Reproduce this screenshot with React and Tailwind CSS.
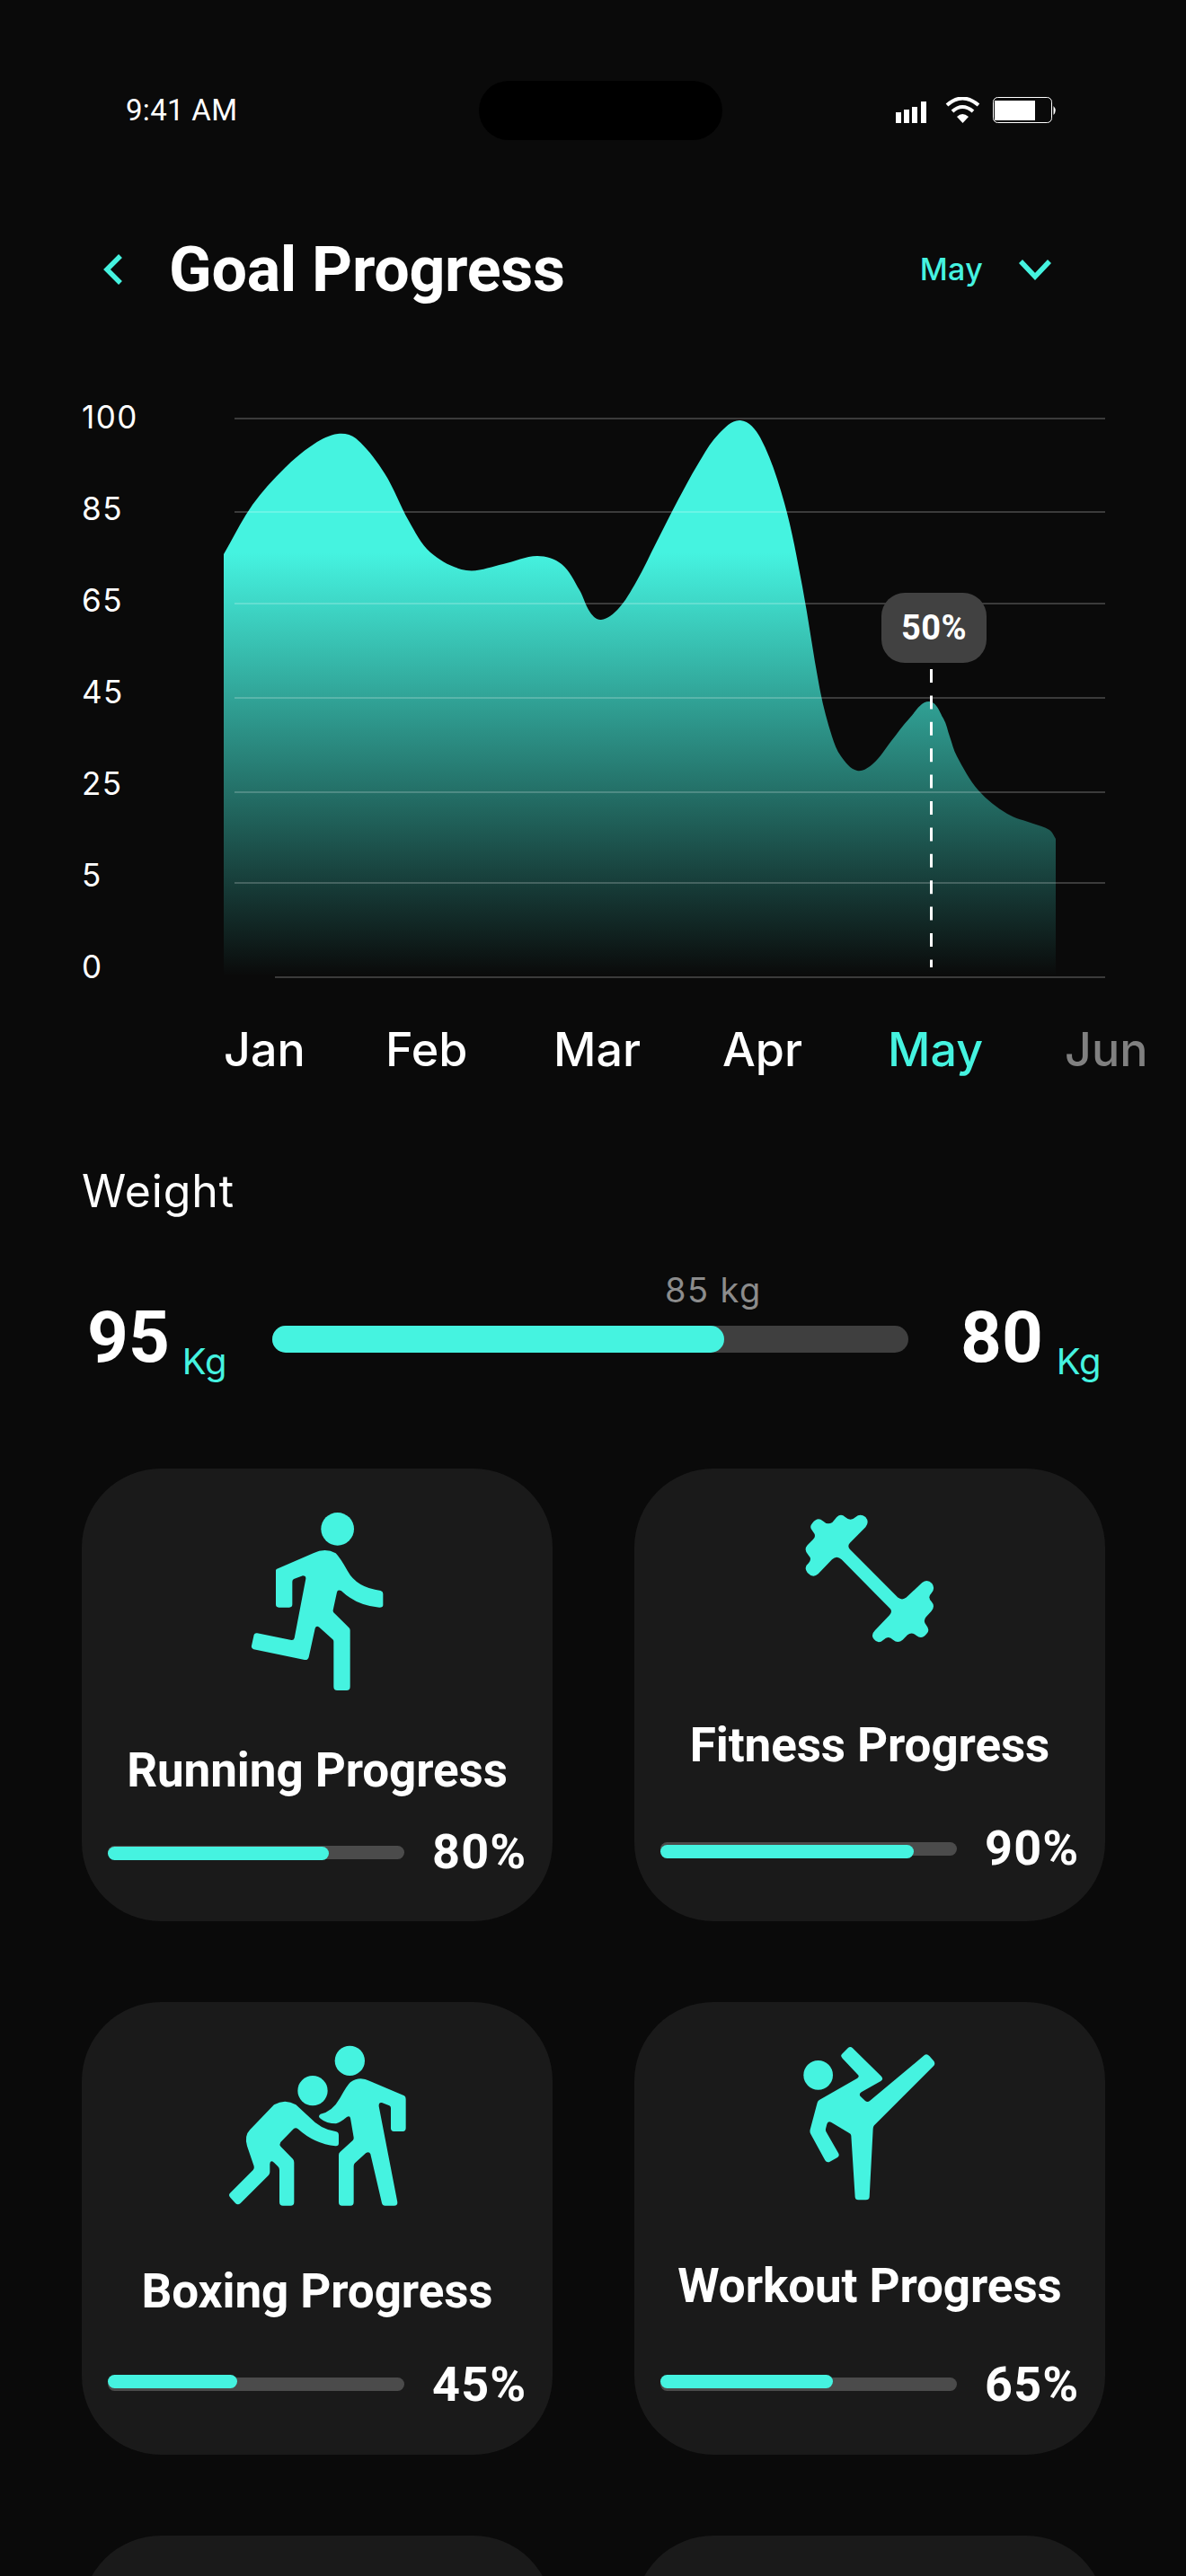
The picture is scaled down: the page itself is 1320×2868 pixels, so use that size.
const pts = [[249,617],[281,562],[317,521],[350,494],[376,483],[396,488],[428,527],[455,580],[479,615],[519,635],[560,628],[598,619],[625,628],[645,657],[657,682],[669,690],[688,678],[708,648],[731,603],[755,556],[779,513],[800,483],[824,468],[846,487],[873,560],[893,653],[913,770],[926,820],[936,842],[954,858],[972,850],[992,825],[1012,800],[1034,781],[1050,800],[1057,820],[1065,842],[1089,880],[1121,906],[1150,917],[1168,924],[1175,934]];

function smooth(p) {
  const d = (a, b) => Math.hypot(a[0] - b[0], a[1] - b[1]);
  const tan = (i) => {
    const a = p[Math.max(i - 1, 0)], b = p[Math.min(i + 1, p.length - 1)];
    const l = d(a, b) || 1;
    return [(b[0] - a[0]) / l, (b[1] - a[1]) / l];
  };
  let s = `M${p[0][0]} ${p[0][1]}`;
  for (let i = 0; i < p.length - 1; i++) {
    const l = d(p[i], p[i + 1]) / 3;
    const t1 = tan(i), t2 = tan(i + 1);
    s += ` C${(p[i][0] + t1[0] * l).toFixed(1)} ${(p[i][1] + t1[1] * l).toFixed(1)} ${(p[i + 1][0] - t2[0] * l).toFixed(1)} ${(p[i + 1][1] - t2[1] * l).toFixed(1)} ${p[i + 1][0]} ${p[i + 1][1]}`;
  }
  return s + " L1175 1087 L249 1087 Z";
}
const curve = smooth(pts);

const Run = () => (
  <svg width="152" height="204" viewBox="170 60 456 612" fill="#45F3E0">
    <circle cx="466" cy="124" r="55" />
    <path d="M262 258 L385 205 Q425 185 460 205 Q475 220 500 265 Q530 320 610 330 Q618 332 618 340 L618 378 Q618 386 606 386 Q530 380 478 330 Q466 325 464 335 L451 395 Q450 402 456 406 L503 452 Q508 456 508 462 L508 650 Q508 663 496 663 L465 663 Q453 663 453 650 L453 500 Q453 496 450 493 L405 452 Q395 445 391 456 L370 552 Q367 563 356 561 L186 526 Q177 523 179 514 L187 477 Q190 470 198 472 L312 495 Q320 496 322 488 L360 290 Q361 280 350 280 L320 291 Q315 294 315 300 L315 376 Q315 386 305 386 L270 386 Q260 386 260 376 L260 262 Z" />
  </svg>
);
const Dumbbell = () => (
  <svg width="148.33" height="150" viewBox="100 60 445 450" fill="#45F3E0">
    <path d="M130 105 Q148 82 165 97 Q180 112 197 102 L212 84 Q226 70 240 84 Q258 100 275 84 Q290 70 308 84 Q322 100 308 118 L256 170 Q246 180 256 192 L415 352 Q430 365 445 352 L497 303 Q515 290 530 306 Q542 322 528 338 Q514 352 528 366 Q542 382 528 398 L510 418 Q498 432 512 447 Q524 462 512 474 Q496 494 478 480 Q462 466 448 478 L432 494 Q416 508 400 494 Q384 478 368 494 Q350 510 336 492 Q324 478 340 462 L388 412 Q400 398 388 388 L228 226 Q212 210 196 226 L150 274 Q132 290 114 270 Q100 252 118 238 Q130 224 118 212 Q100 194 114 178 L132 160 Q146 148 132 132 Q118 118 130 105 Z" />
  </svg>
);
const Boxing = () => (
  <svg width="202" height="181.67" viewBox="66 45 606 545" fill="#45F3E0">
    <circle cx="478" cy="100" r="50" />
    <circle cx="354" cy="200" r="50" />
    <path d="M545 168 L660 217 Q665 220 665 228 L665 325 Q665 336 655 336 L625 336 Q615 336 615 325 L615 258 Q615 252 610 250 L585 240 Q574 238 575 252 L637 572 Q638 584 626 584 L596 584 Q587 584 585 575 L547 412 Q543 402 532 408 L495 442 Q491 446 491 452 L491 572 Q491 584 480 584 L452 584 Q441 584 441 572 L441 415 Q441 408 446 404 L488 366 Q492 362 491 356 L480 292 Q478 282 468 288 Q448 305 432 310 Q400 310 380 293 Q370 285 380 278 Q420 270 445 225 Q470 180 480 172 Q510 150 545 168 Z" />
    <path d="M225 247 Q262 225 298 247 L345 290 Q380 328 430 336 Q441 338 441 348 L441 376 Q441 386 430 385 Q360 378 305 328 Q297 322 290 328 L247 372 Q242 380 247 386 L288 428 Q292 432 292 440 L292 572 Q292 584 280 584 L255 584 Q243 584 243 572 L243 465 Q243 458 238 453 L225 440 Q212 430 211 445 L211 472 Q211 478 207 482 L113 576 Q104 584 96 576 L78 556 Q72 548 78 542 L155 465 Q160 460 158 452 L135 385 Q125 350 145 330 Z" />
  </svg>
);
const Kick = () => (
  <svg width="151.67" height="176.67" viewBox="95 45 455 530" fill="#45F3E0">
    <circle cx="151" cy="148" r="49" />
    <path d="M230 78 L250 58 Q258 50 266 58 L362 152 Q370 162 360 168 L295 205 Q285 212 293 220 L308 234 Q316 240 324 233 L505 82 Q513 74 522 84 L536 100 Q544 110 536 118 L338 316 Q334 320 334 328 L322 555 Q321 565 310 565 L285 565 Q275 565 274 555 L261 350 Q260 344 255 342 L195 306 Q183 300 180 312 L176 328 Q175 334 178 338 L218 408 Q224 418 214 424 L190 437 Q180 442 174 433 L126 345 Q122 338 124 330 L148 240 Q150 233 156 230 L282 158 Q290 152 283 146 L232 92 Q224 84 230 78 Z" />
  </svg>
);

const grid = [466, 570, 672, 777, 882, 983];

function Card({ icon, title, pct, fill, pt, titleMt, rowMt, fillTop }) {
  return (
    <div className={`flex h-[504px] w-[524px] flex-col items-center rounded-[88px] bg-[#1A1A1A] ${pt}`}>
      {icon}
      <h3 className={`font-['Roboto'] text-[53px] leading-[60px] font-bold tracking-[-0.1px] whitespace-nowrap text-white ${titleMt}`}>{title}</h3>
      <div className={`flex h-[60px] w-full items-center gap-[31px] pl-[29px] ${rowMt}`}>
        <div className="relative h-[15px] w-[330px] shrink-0 rounded-full bg-[#4B4B4B]">
          <div className={`absolute left-0 h-[15px] rounded-full bg-[#45F3E0] ${fill} ${fillTop}`} />
        </div>
        <span className="font-['Roboto'] text-[54px] leading-[60px] font-bold tracking-[1.2px] whitespace-nowrap text-white">{pct}</span>
      </div>
    </div>
  );
}

export default function App() {
  return (
    <div className="h-[2868px] w-[1320px] overflow-hidden bg-[#0A0A0A] pt-[90px] font-['Inter',sans-serif]">
      {/* status bar */}
      <div className="flex h-[66px] items-center pl-[140px]">
        <span className="w-[393px] font-['Roboto'] text-[33px] leading-[40px] tracking-[0.3px] text-white">9:41 AM</span>
        <div className="h-[66px] w-[271px] rounded-[33px] bg-black" />
        <svg className="ml-[193px]" width="180" height="30" viewBox="997 109 180 30" fill="white">
          <rect x="997" y="126" width="6" height="12" />
          <rect x="1006" y="123" width="6" height="15" />
          <rect x="1015" y="120" width="6" height="18" />
          <rect x="1025" y="114" width="6" height="24" />
          <path d="M1054 118 Q1071 103 1089 118" fill="none" stroke="white" strokeWidth="4" />
          <path d="M1060 125 Q1071 115 1083 125" fill="none" stroke="white" strokeWidth="4" />
          <path d="M1065 131 Q1071 125 1078 131 L1071.5 138 Z" />
          <rect x="1105.5" y="109.5" width="65" height="28" rx="5" fill="none" stroke="white" />
          <rect x="1107" y="113" width="45" height="22" />
          <path d="M1172.5 119 Q1177 124 1172.5 129 Z" />
        </svg>
      </div>

      {/* header */}
      <div className="mt-[104px] flex h-[80px] items-center pr-[150px] pl-[114px]">
        <svg width="24" height="36" viewBox="0 0 24 36" fill="none" stroke="#45F3E0" strokeWidth="5.5" strokeLinejoin="miter">
          <path d="M20 3 L5 18 L20 33" />
        </svg>
        <h1 className="ml-[50px] font-['Roboto'] text-[70px] leading-[80px] font-bold tracking-[-0.3px] whitespace-nowrap text-white">Goal Progress</h1>
        <span className="ml-auto font-['Inter'] text-[34px] leading-[44px] font-medium tracking-[0.3px] text-[#45F3E0]">May</span>
        <svg className="ml-[40px]" width="36" height="24" viewBox="0 0 36 24" fill="none" stroke="#45F3E0" strokeWidth="5.5">
          <path d="M2 3 L18 20 L34 3" />
        </svg>
      </div>

      {/* chart */}
      <div className="mt-[103px] flex pl-[91px]">
        <div className="mt-[1px] flex h-[652px] w-[158px] flex-col justify-between font-['Inter'] text-[35px] leading-[40px] tracking-[1.5px] text-white">
          {["100", "85", "65", "45", "25", "5", "0"].map((l) => (
            <span key={l}>{l}</span>
          ))}
        </div>
        <div className="relative h-[653px] w-[981px]">
          <svg width="981" height="653" viewBox="249 443 981 653">
            <defs>
              <linearGradient id="area" x1="0" y1="467" x2="0" y2="1087" gradientUnits="userSpaceOnUse">
                <stop offset="0.24" stopColor="#45F3E0" />
                <stop offset="1" stopColor="#45F3E0" stopOpacity="0" />
              </linearGradient>
            </defs>
            <path d={curve} fill="url(#area)" />
            {grid.map((y) => (
              <line key={y} x1="261" x2="1230" y1={y} y2={y} stroke="white" strokeOpacity="0.2" strokeWidth="2" />
            ))}
            <line x1="306" x2="1230" y1="1088" y2="1088" stroke="white" strokeOpacity="0.2" strokeWidth="2" />
            <line x1="1036.5" x2="1036.5" y1="745" y2="1077" stroke="white" strokeWidth="3" strokeDasharray="15 14.4" />
          </svg>
          <div className="absolute top-[217px] left-[732px] flex h-[78px] w-[117px] items-center justify-center rounded-[26px] bg-[#414141] font-['Roboto'] text-[38px] font-bold tracking-[0.5px] text-white">50%</div>
        </div>
      </div>

      {/* months */}
      <div className="mt-[42px] flex pl-[249px] font-['Inter'] text-[52px] leading-[62px] font-medium whitespace-nowrap text-white">
        <span className="w-[180px]">Jan</span>
        <span className="w-[187px]">Feb</span>
        <span className="w-[188px]">Mar</span>
        <span className="w-[184px]">Apr</span>
        <span className="w-[197px] text-[#45F3E0]">May</span>
        <span className="text-[#808080]">Jun</span>
      </div>

      {/* weight */}
      <div className="mt-[96px] pl-[91px] font-['Inter'] text-[50px] leading-[60px] tracking-[0.9px] text-white">Weight</div>

      <div className="mt-[80px] flex h-[110px] items-center pl-[97px]">
        <div className="flex w-[206px] items-baseline">
          <span className="-translate-y-[2px] font-['Roboto'] text-[80px] font-bold text-white">95</span>
          <span className="ml-[14px] translate-y-[12px] font-['Inter'] text-[40px] text-[#45F3E0]">Kg</span>
        </div>
        <div className="relative h-[30px] w-[708px] rounded-full bg-[#3F3F3F]">
          <div className="h-[30px] w-[503px] rounded-full bg-[#45F3E0]" />
          <span className="absolute -top-[68px] left-[437px] font-['Inter'] text-[38px] tracking-[1.4px] whitespace-nowrap text-[#8C8C8C]">85 kg</span>
        </div>
        <div className="ml-[58px] flex items-baseline">
          <span className="-translate-y-[2px] font-['Roboto'] text-[80px] font-bold text-white">80</span>
          <span className="ml-[15px] translate-y-[12px] font-['Inter'] text-[40px] text-[#45F3E0]">Kg</span>
        </div>
      </div>

      {/* cards */}
      <div className="mt-[89px] grid grid-cols-[524px_524px] gap-x-[91px] gap-y-[90px] pl-[91px]">
        <Card icon={<Run />} title="Running Progress" pct="80%" fill="w-[246px]" pt="pt-[46px]" titleMt="mt-[56px]" rowMt="mt-[31px]" fillTop="top-[1px]" />
        <Card icon={<Dumbbell />} title="Fitness Progress" pct="90%" fill="w-[282px]" pt="pt-[46px]" titleMt="mt-[82px]" rowMt="mt-[55px]" fillTop="top-[3px]" />
        <Card icon={<Boxing />} title="Boxing Progress" pct="45%" fill="w-[144px]" pt="pt-[47px]" titleMt="mt-[63px]" rowMt="mt-[44px]" fillTop="-top-[3px]" />
        <Card icon={<Kick />} title="Workout Progress" pct="65%" fill="w-[192px]" pt="pt-[47px]" titleMt="mt-[62px]" rowMt="mt-[50px]" fillTop="-top-[3px]" />
        <div className="h-[504px] rounded-[88px] bg-[#1A1A1A]" />
        <div className="h-[504px] rounded-[88px] bg-[#1A1A1A]" />
      </div>
    </div>
  );
}
